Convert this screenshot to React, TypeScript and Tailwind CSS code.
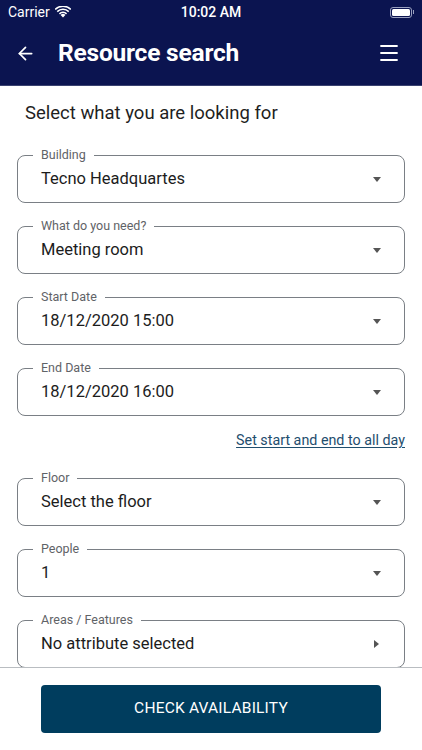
import React from 'react';
import { ArrowLeft, Menu } from 'lucide-react';

interface Field {
  id: number;
  label: string;
  value: string;
  arrow?: 'down' | 'right';
}

const topFields: Field[] = [
  { id: 1, label: 'Building', value: 'Tecno Headquartes' },
  { id: 2, label: 'What do you need?', value: 'Meeting room' },
  { id: 3, label: 'Start Date', value: '18/12/2020 15:00' },
  { id: 4, label: 'End Date', value: '18/12/2020 16:00' },
];

const bottomFields: Field[] = [
  { id: 5, label: 'Floor', value: 'Select the floor' },
  { id: 6, label: 'People', value: '1' },
  { id: 7, label: 'Areas / Features', value: 'No attribute selected', arrow: 'right' },
];

const SelectField: React.FC<{ field: Field }> = ({ field }) => (
  <div className="relative h-[48px] rounded-[8px] border border-[#7a7f85] flex items-center pl-[23px] pr-[22px]">
    <span className="absolute left-[15px] top-[-9px] bg-white px-[8px] text-[12.5px] leading-[16px] text-[#5f6367]">
      {field.label}
    </span>
    <span className="flex-1 text-[16.5px] text-[#1c1c1c] pt-[1px]">{field.value}</span>
    {field.arrow === 'right' ? (
      <span className="w-0 h-0 border-y-[4px] border-y-transparent border-l-[5px] border-l-[#555] mr-[3px]" />
    ) : (
      <span className="w-0 h-0 border-x-[4.5px] border-x-transparent border-t-[5px] border-t-[#555] mr-[1px]" />
    )}
  </div>
);

const WifiIcon: React.FC = () => (
  <svg width="16" height="12" viewBox="0 0 16 12" fill="white">
    <path d="M8 11.5 L5.6 9 A3.4 3.4 0 0 1 10.4 9 Z" />
    <path d="M3.9 7.3 A5.8 5.8 0 0 1 12.1 7.3 L11 8.4 A4.3 4.3 0 0 0 5 8.4 Z" />
    <path d="M1.7 5.1 A8.9 8.9 0 0 1 14.3 5.1 L13.2 6.2 A7.4 7.4 0 0 0 2.8 6.2 Z" />
    <path d="M-0.4 2.9 A11.9 11.9 0 0 1 16.4 2.9 L15.3 4 A10.4 10.4 0 0 0 0.7 4 Z" />
  </svg>
);

export default function App() {
  return (
    <div className="h-[750px] w-full flex flex-col bg-white overflow-hidden" style={{ fontFamily: 'Roboto, "Noto Sans", sans-serif' }}>
      {/* Header */}
      <div className="bg-[#0b1450] h-[86px] border-b border-[#3a4270] shrink-0">
        <div className="h-[24px] flex items-center justify-between px-[8px] text-white text-[14px]">
          <div className="flex items-center gap-[5px] w-[100px]">
            <span>Carrier</span>
            <WifiIcon />
          </div>
          <span className="font-medium">10:02 AM</span>
          <div className="w-[100px] flex justify-end items-center">
            <div className="w-[22px] h-[11px] rounded-[3px] border border-[#9aa0bf] p-[1px]">
              <div className="w-full h-full bg-white rounded-[1.5px]" />
            </div>
            <div className="w-[1.5px] h-[4px] bg-[#9aa0bf] ml-[1px]" />
          </div>
        </div>
        <div className="h-[58px] flex items-center pl-[15px] pr-[21px]">
          <ArrowLeft size={21} color="white" strokeWidth={2} />
          <h1 className="ml-[22px] flex-1 text-white text-[24.5px] font-bold tracking-[-0.2px]">Resource search</h1>
          <Menu size={24} color="white" strokeWidth={1.8} />
        </div>
      </div>

      {/* Form */}
      <div className="flex-1 overflow-hidden px-[17px]">
        <p className="mt-[15px] ml-[8px] text-[18.5px] leading-[24px] text-[#1f1f1f]">Select what you are looking for</p>
        <div className="mt-[30px] flex flex-col gap-[23px]">
          {topFields.map((f) => (
            <SelectField key={f.id} field={f} />
          ))}
        </div>
        <div className="mt-[15px] flex justify-end">
          <a href="#" className="text-[14.3px] leading-[18px] text-[#1f4e6e] underline underline-offset-2">
            Set start and end to all day
          </a>
        </div>
        <div className="mt-[29px] flex flex-col gap-[23px]">
          {bottomFields.map((f) => (
            <SelectField key={f.id} field={f} />
          ))}
        </div>
      </div>

      {/* Footer */}
      <div className="h-[83px] shrink-0 border-t border-[#b9bdc1] bg-white flex justify-center pt-[17px]">
        <button className="w-[340px] h-[48px] rounded-[4px] bg-[#003d5e] text-white text-[15.5px] font-normal tracking-[0.2px]">
          CHECK AVAILABILITY
        </button>
      </div>
    </div>
  );
}
